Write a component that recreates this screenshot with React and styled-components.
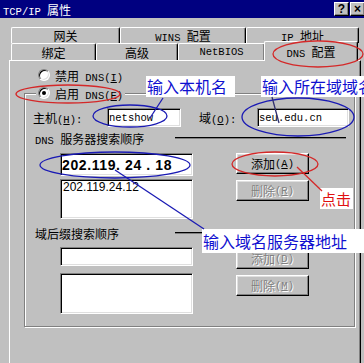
import styled, { createGlobalStyle } from "styled-components";

const GlobalStyle = createGlobalStyle`
  html, body { margin: 0; padding: 0; background: #c0c0c0; }
  body {
    font-family: "Noto Sans CJK SC", "Liberation Sans", sans-serif;
    font-size: 12px;
    color: #000;
  }
`;

const Window = styled.div`
  position: relative;
  width: 364px;
  height: 363px;
  overflow: hidden;
  background: #c0c0c0;
  display: flex;
  flex-direction: column;
`;

const TitleBar = styled.div`
  flex: none;
  height: 18px;
  background: #000080;
  color: #fff;
  display: flex;
  align-items: center;
  justify-content: space-between;
  padding-left: 3px;
  white-space: nowrap;
`;

const TitleButtons = styled.div`
  display: flex;
  gap: 1px;
  margin-right: -1px;
`;

const TitleBtn = styled.div`
  width: 15px;
  height: 14px;
  box-sizing: border-box;
  background: #c0c0c0;
  color: #000;
  border: 1px solid;
  border-color: #fff #000 #000 #fff;
  box-shadow: inset -1px -1px 0 #808080;
  font: bold 12px "Liberation Sans", sans-serif;
  display: flex;
  align-items: center;
  justify-content: center;
`;

// 한자 사이에 섞인 영문은 SimSun처럼 좁은 고정폭으로
const Lat = styled.span`
  font-family: "Liberation Mono", monospace;
  font-size: 10.5px;
`;

const U = styled.span`
  text-decoration: underline;
`;

const Body = styled.div`
  flex: 1;
  min-height: 0;
  display: flex;
  flex-direction: column;
  padding: 9px 0 0 9px;
`;

const TabRow = styled.div`
  flex: none;
  display: flex;
  align-items: flex-end;
  height: ${(p) => p.$h}px;
  padding-left: 2px;
`;

const Tab = styled.div`
  position: relative;
  box-sizing: border-box;
  width: ${(p) => p.$w}px;
  height: ${(p) => (p.$active ? 20 : p.$h)}px;
  margin-left: ${(p) => (p.$active ? -1 : 0)}px;
  margin-bottom: ${(p) => (p.$active ? -1 : 0)}px;
  z-index: ${(p) => (p.$active ? 2 : "auto")};
  background: #c0c0c0;
  border-top: 1px solid #fff;
  border-left: 1px solid #fff;
  border-right: 1px solid #000;
  box-shadow: inset -1px 0 0 #808080;
  border-radius: 2px 2px 0 0;
  display: flex;
  align-items: center;
  justify-content: center;
  padding-bottom: ${(p) => (p.$active ? 1 : 0)}px;
  white-space: pre;
`;

const Page = styled.div`
  flex: 1;
  width: 352px;
  box-sizing: border-box;
  border-top: 1px solid #fff;
  border-left: 1px solid #fff;
  border-right: 1px solid #000;
  box-shadow: inset -1px 0 0 #808080;
  padding: 7px 0 0 14px;
`;

const RadioRow = styled.div`
  display: flex;
  align-items: center;
  gap: 5px;
  height: 14px;
  margin-left: 14px;
  white-space: nowrap;
`;

const RadioDot = styled.span`
  position: relative;
  flex: none;
  width: 12px;
  height: 12px;
  box-sizing: border-box;
  border-radius: 50%;
  background: #fff;
  border: 1px solid;
  border-color: #808080 #fff #fff #808080;
  box-shadow: inset 1px 1px 0 #000, inset -1px -1px 0 #dfdfdf;
  &::after {
    content: "";
    position: absolute;
    left: 3px;
    top: 3px;
    width: 4px;
    height: 4px;
    border-radius: 50%;
    background: #000;
    display: ${(p) => (p.$on ? "block" : "none")};
  }
`;

const Group = styled.div`
  margin-top: 11px;
  width: 331px;
  box-sizing: border-box;
  border: 1px solid #808080;
  box-shadow: 1px 1px 0 #fff, inset 1px 1px 0 #fff;
  padding: 0 0 12px 8px;
`;

const Legend = styled.div`
  display: flex;
  align-items: center;
  gap: 5px;
  width: fit-content;
  height: 14px;
  margin: -8px 0 0 3px;
  padding: 0 2px;
  background: #c0c0c0;
  white-space: nowrap;
`;

const HostRow = styled.div`
  display: flex;
  align-items: center;
  height: 19px;
  margin-top: 8px;
`;

const FieldLabel = styled.span`
  width: ${(p) => p.$w}px;
  margin-left: ${(p) => p.$gap || 0}px;
  white-space: nowrap;
`;

const Edit = styled.div`
  flex: none;
  box-sizing: border-box;
  width: ${(p) => p.$w}px;
  height: ${(p) => p.$h}px;
  background: #fff;
  border: 1px solid;
  border-color: #808080 #fff #fff #808080;
  box-shadow: inset 1px 1px 0 #000, inset -1px -1px 0 #dfdfdf;
  display: flex;
  align-items: ${(p) => (p.$list ? "flex-start" : "center")};
  padding: ${(p) => (p.$list ? "1px 0 0 2px" : "0 0 0 1px")};
  overflow: hidden;
  white-space: pre;
`;

const EditText = styled.span`
  font-family: "Liberation Mono", monospace;
  font-size: 10.5px;
`;

const IpText = styled.span`
  font: bold 14px "Liberation Sans", sans-serif;
  letter-spacing: 0.6px;
`;

const ListItem = styled.span`
  font: 12px/13px "Liberation Sans", sans-serif;
`;

const SectionRow = styled.div`
  display: flex;
  align-items: center;
  height: 12px;
  margin-top: ${(p) => p.$top}px;
  padding-left: 2px;
`;

const SectionTitle = styled.span`
  width: 140px;
  white-space: nowrap;
`;

const Rule = styled.div`
  flex: 1;
  margin-right: 8px;
  border-top: 1px solid #000;
  border-bottom: 1px solid #808080;
`;

const ListRow = styled.div`
  display: flex;
  align-items: flex-start;
  margin-top: ${(p) => p.$top}px;
  padding-left: 27px;
`;

const Button = styled.div`
  flex: none;
  box-sizing: border-box;
  width: 73px;
  height: 21px;
  margin: ${(p) => p.$top || 0}px 0 0 43px;
  background: #c0c0c0;
  border: 1px solid;
  border-color: #fff #000 #000 #fff;
  box-shadow: inset -1px -1px 0 #808080, inset 1px 1px 0 #dfdfdf;
  display: flex;
  align-items: center;
  justify-content: center;
  white-space: nowrap;
  color: ${(p) => (p.$disabled ? "#808080" : "#000")};
  text-shadow: ${(p) => (p.$disabled ? "1px 1px 0 #fff" : "none")};
`;

const Callout = styled.div`
  position: absolute;
  left: ${(p) => p.$x}px;
  top: ${(p) => p.$y}px;
  width: ${(p) => p.$w}px;
  height: ${(p) => p.$h}px;
  background: #fff;
  color: ${(p) => p.$color};
  font-size: ${(p) => p.$size}px;
  line-height: ${(p) => p.$h}px;
  padding-left: 1px;
  white-space: nowrap;
  z-index: 5;
`;

const Marks = styled.svg`
  position: absolute;
  left: 0;
  top: 0;
  z-index: 6;
  pointer-events: none;
`;

const BLUE = "#1a1ab4";
const RED = "#d42828";

export default function App() {
  return (
    <>
      <GlobalStyle />
      <Window>
        <TitleBar>
          <span>
            <Lat>TCP/IP </Lat>属性
          </span>
          <TitleButtons>
            <TitleBtn>?</TitleBtn>
            <TitleBtn>×</TitleBtn>
          </TitleButtons>
        </TitleBar>

        <Body>
          <TabRow $h={16}>
            <Tab $w={109} $h={16}>
              <span>网关</span>
            </Tab>
            <Tab $w={126} $h={16}>
              <span>
                <Lat>WINS </Lat>配置
              </span>
            </Tab>
            <Tab $w={113} $h={16}>
              <span>
                <Lat>IP </Lat>地址
              </span>
            </Tab>
          </TabRow>
          <TabRow $h={17}>
            <Tab $w={85} $h={17}>
              <span>绑定</span>
            </Tab>
            <Tab $w={82} $h={17}>
              <span>高级</span>
            </Tab>
            <Tab $w={87} $h={17}>
              <Lat>NetBIOS</Lat>
            </Tab>
            <Tab $w={94} $active>
              <span>
                <Lat>DNS </Lat>配置
              </span>
            </Tab>
          </TabRow>

          <Page>
            <RadioRow>
              <RadioDot />
              <span>
                禁用<Lat> DNS(<U>I</U>)</Lat>
              </span>
            </RadioRow>

            <Group>
              <Legend>
                <RadioDot $on />
                <span>
                  启用<Lat> DNS(<U>E</U>)</Lat>
                </span>
              </Legend>

              <HostRow>
                <FieldLabel $w={74}>
                  主机<Lat>(<U>H</U>):</Lat>
                </FieldLabel>
                <Edit $w={74} $h={19}>
                  <EditText>netshow</EditText>
                </Edit>
                <FieldLabel $w={58} $gap={18}>
                  域<Lat>(<U>O</U>):</Lat>
                </FieldLabel>
                <Edit $w={92} $h={19}>
                  <EditText>seu.edu.cn</EditText>
                </Edit>
              </HostRow>

              <SectionRow $top={5}>
                <SectionTitle>
                  <Lat>DNS </Lat>服务器搜索顺序
                </SectionTitle>
                <Rule />
              </SectionRow>

              <ListRow $top={9}>
                <Edit $w={133} $h={23}>
                  <IpText>202.119. 24 . 18</IpText>
                </Edit>
                <Button>
                  添加<Lat>(<U>A</U>)</Lat>
                </Button>
              </ListRow>

              <ListRow $top={3}>
                <Edit $w={133} $h={40} $list>
                  <ListItem>202.119.24.12</ListItem>
                </Edit>
                <Button $top={1} $disabled>
                  删除<Lat>(<U>R</U>)</Lat>
                </Button>
              </ListRow>

              <SectionRow $top={8}>
                <SectionTitle>域后缀搜索顺序</SectionTitle>
                <Rule />
              </SectionRow>

              <ListRow $top={8}>
                <Edit $w={133} $h={19} />
                <Button $top={1} $disabled>
                  添加<Lat>(<U>D</U>)</Lat>
                </Button>
              </ListRow>

              <ListRow $top={4}>
                <Edit $w={133} $h={41} $list />
                <Button $top={2} $disabled>
                  删除<Lat>(<U>M</U>)</Lat>
                </Button>
              </ListRow>
            </Group>
          </Page>
        </Body>

        <Callout $x={146} $y={76} $w={88} $h={21} $size={16} $color="#1010d0">
          输入本机名
        </Callout>
        <Callout $x={261} $y={76} $w={115} $h={21} $size={16} $color="#1010d0">
          输入所在域域名
        </Callout>
        <Callout $x={320} $y={188} $w={32} $h={21} $size={15} $color="#e01010">
          点击
        </Callout>
        <Callout $x={202} $y={229} $w={162} $h={24} $size={16} $color="#1010d0">
          输入域名服务器地址
        </Callout>

        <Marks width="364" height="363" viewBox="0 0 364 363">
          <g fill="none" strokeWidth="1.3">
            <ellipse cx="318" cy="54" rx="45" ry="13" stroke={RED} />
            <ellipse cx="68" cy="94" rx="52" ry="9" stroke={RED} />
            <ellipse cx="130" cy="116" rx="37" ry="11" stroke={BLUE} />
            <ellipse cx="298" cy="117" rx="56" ry="19" stroke={BLUE} />
            <ellipse cx="115" cy="165" rx="75" ry="13" stroke={BLUE} />
            <ellipse cx="275" cy="164" rx="43" ry="12" stroke={RED} />
            <line x1="163" y1="98" x2="150" y2="118" stroke={BLUE} />
            <line x1="272" y1="97" x2="279" y2="123" stroke="#303070" />
            <line x1="115" y1="170" x2="204" y2="229" stroke={BLUE} />
            <line x1="297" y1="167" x2="322" y2="191" stroke={RED} />
          </g>
        </Marks>
      </Window>
    </>
  );
}
